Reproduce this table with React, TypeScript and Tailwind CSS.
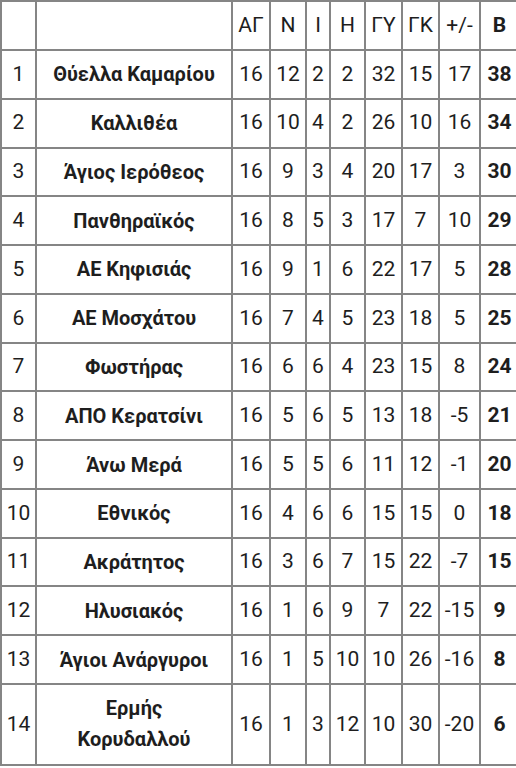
import React from "react";

const rows: [string, string, number, number, number, number, number, number, number, number][] = [
  ["1", "Θύελλα Καμαρίου", 16, 12, 2, 2, 32, 15, 17, 38],
  ["2", "Καλλιθέα", 16, 10, 4, 2, 26, 10, 16, 34],
  ["3", "Άγιος Ιερόθεος", 16, 9, 3, 4, 20, 17, 3, 30],
  ["4", "Πανθηραϊκός", 16, 8, 5, 3, 17, 7, 10, 29],
  ["5", "ΑΕ Κηφισιάς", 16, 9, 1, 6, 22, 17, 5, 28],
  ["6", "ΑΕ Μοσχάτου", 16, 7, 4, 5, 23, 18, 5, 25],
  ["7", "Φωστήρας", 16, 6, 6, 4, 23, 15, 8, 24],
  ["8", "ΑΠΟ Κερατσίνι", 16, 5, 6, 5, 13, 18, -5, 21],
  ["9", "Άνω Μερά", 16, 5, 5, 6, 11, 12, -1, 20],
  ["10", "Εθνικός", 16, 4, 6, 6, 15, 15, 0, 18],
  ["11", "Ακράτητος", 16, 3, 6, 7, 15, 22, -7, 15],
  ["12", "Ηλυσιακός", 16, 1, 6, 9, 7, 22, -15, 9],
  ["13", "Άγιοι Ανάργυροι", 16, 1, 5, 10, 10, 26, -16, 8],
  ["14", "Ερμής Κορυδαλλού", 16, 1, 3, 12, 10, 30, -20, 6],
];

const headers = ["", "", "ΑΓ", "Ν", "Ι", "Η", "ΓΥ", "ΓΚ", "+/-", "Β"];

const cell =
  "flex items-center justify-center text-center border-r-2 border-b-2 border-[#858585]";

const cols = "grid grid-cols-[35px_196px_38px_36px_24px_35px_37px_37px_41px_39px]";

export default function App() {
  return (
    <div className="w-[516px] h-[768px] overflow-hidden bg-white">
      <div
        className="grid w-[520px] border-t-2 border-l-2 border-[#858585] text-[21px] text-[#1e1e1e] leading-[1.4]"
        style={{ fontFamily: "Roboto, 'Noto Sans', sans-serif" }}
      >
        <div className={`${cols} h-[49px]`}>
          {headers.map((h, i) => (
            <div key={i} className={`${cell} whitespace-nowrap ${i === 9 ? "font-bold" : ""}`}>
              {h}
            </div>
          ))}
        </div>
        {rows.map((r, ri) => (
          <div key={ri} className={`${cols} ${ri === 13 ? "h-[81px]" : "h-[48.77px]"}`}>
            {r.map((v, i) => {
              if (i === 1 && ri === 13) {
                return (
                  <div key={i} className={`${cell} font-bold text-[20px] leading-[1.55]`}>
                    <span className="w-[130px]">{v}</span>
                  </div>
                );
              }
              return (
                <div
                  key={i}
                  className={`${cell} whitespace-nowrap ${i === 1 ? "font-bold text-[20px] px-1" : ""} ${
                    i === 9 ? "font-bold" : ""
                  }`}
                >
                  {v}
                </div>
              );
            })}
          </div>
        ))}
      </div>
    </div>
  );
}
